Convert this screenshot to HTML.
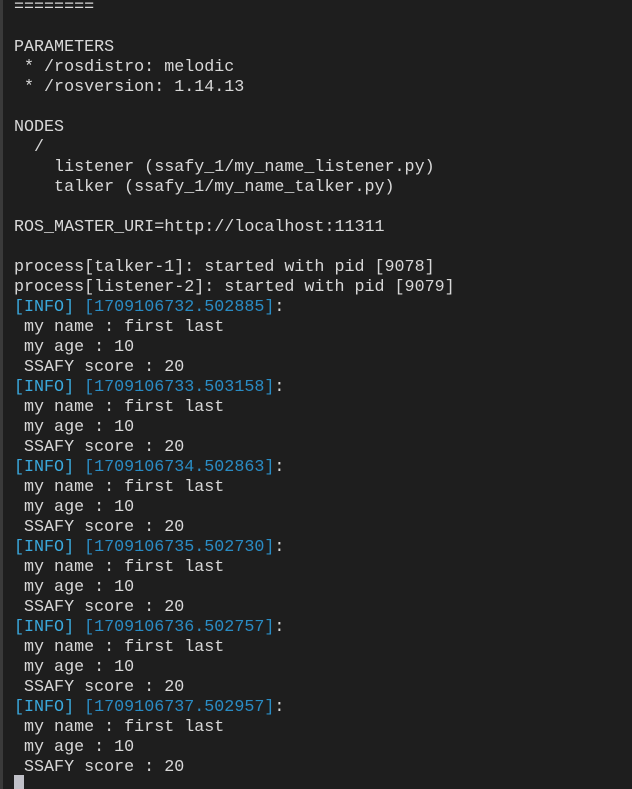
<!DOCTYPE html>
<html><head><meta charset="utf-8"><style>
html,body{margin:0;padding:0;background:#1e1e1e;width:632px;height:789px;overflow:hidden}
.l{position:absolute;left:0;top:0;width:3px;height:789px;background:#3a3a3a}
pre{position:absolute;left:14px;top:-2px;margin:0;font-family:"Liberation Mono",monospace;font-size:16.7px;line-height:20px;color:#d8d8d8}
.i{color:#3aa9dd}.t{color:#2a8cc4}
.c{position:absolute;left:14px;top:775px;width:10px;height:14px;background:#c0c0c8}
</style></head><body><div class="l"></div><pre>========

PARAMETERS
 * /rosdistro: melodic
 * /rosversion: 1.14.13

NODES
  /
    listener (ssafy_1/my_name_listener.py)
    talker (ssafy_1/my_name_talker.py)

ROS_MASTER_URI=http://localhost:11311

process[talker-1]: started with pid [9078]
process[listener-2]: started with pid [9079]
<span class="i">[INFO]</span> <span class="t">[1709106732.502885]</span>:
 my name : first last
 my age : 10
 SSAFY score : 20
<span class="i">[INFO]</span> <span class="t">[1709106733.503158]</span>:
 my name : first last
 my age : 10
 SSAFY score : 20
<span class="i">[INFO]</span> <span class="t">[1709106734.502863]</span>:
 my name : first last
 my age : 10
 SSAFY score : 20
<span class="i">[INFO]</span> <span class="t">[1709106735.502730]</span>:
 my name : first last
 my age : 10
 SSAFY score : 20
<span class="i">[INFO]</span> <span class="t">[1709106736.502757]</span>:
 my name : first last
 my age : 10
 SSAFY score : 20
<span class="i">[INFO]</span> <span class="t">[1709106737.502957]</span>:
 my name : first last
 my age : 10
 SSAFY score : 20</pre><div class="c"></div></body></html>
